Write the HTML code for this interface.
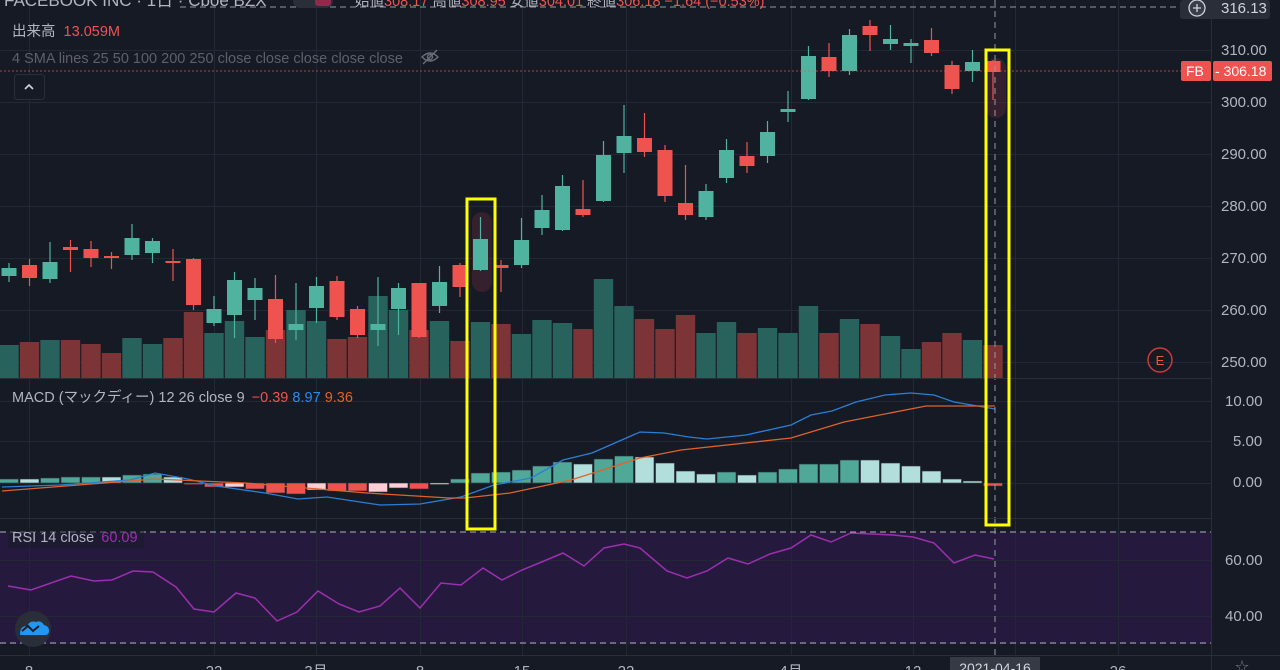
<!DOCTYPE html>
<html><head><meta charset="utf-8"><style>
html,body{margin:0;padding:0;background:#161a25;width:1280px;height:670px;overflow:hidden}
svg{display:block}
text{font-family:"Liberation Sans","Noto Sans CJK JP",sans-serif}
</style></head><body>
<svg id="s" width="1280" height="670" viewBox="0 0 1280 670" xmlns="http://www.w3.org/2000/svg">
<rect width="1280" height="670" fill="#161a25"/>
<rect x="0" y="532" width="1212" height="112" fill="#251a3e"/>
<g id="grid" stroke="#232837" stroke-width="1"></g>
<g id="vol"></g>
<rect x="472" y="212" width="20" height="80" rx="10" fill="#5a2838" opacity="0.45"/>
<rect x="986" y="58" width="20" height="60" rx="10" fill="#5a2838" opacity="0.45"/>
<g id="cdl"></g>
<g id="hist"></g>
<polyline id="macd" fill="none" stroke="#2a7fd4" stroke-width="1.3"/>
<polyline id="sig" fill="none" stroke="#e0622a" stroke-width="1.3"/>
<polyline id="rsi" fill="none" stroke="#9c2fae" stroke-width="1.5"/>
<line x1="0" y1="532" x2="1212" y2="532" stroke="#b0b3bd" stroke-dasharray="6,4"/>
<line x1="0" y1="643" x2="1212" y2="643" stroke="#b0b3bd" stroke-dasharray="6,4"/>
<line x1="0" y1="71" x2="1212" y2="71" stroke="#ef5350" stroke-dasharray="2,2" opacity="0.7"/>
<line x1="180" y1="7" x2="1190" y2="7" stroke="#9598a1" stroke-dasharray="6,4"/>
<line x1="995" y1="0" x2="995" y2="660" stroke="#9598a1" stroke-dasharray="6,5"/>
<line x1="0" y1="378.5" x2="1212" y2="378.5" stroke="#2a2e39"/>
<line x1="0" y1="518.5" x2="1212" y2="518.5" stroke="#2a2e39"/>
<line x1="0" y1="655.5" x2="1280" y2="655.5" stroke="#2a2e39"/>
<line x1="1211.5" y1="0" x2="1211.5" y2="670" stroke="#2a2e39"/>
<rect x="467" y="199" width="28" height="330" fill="none" stroke="#ffff00" stroke-width="3"/>
<rect x="986" y="50" width="23" height="475" fill="none" stroke="#ffff00" stroke-width="3"/>
<text x="4" y="6" font-size="17" fill="#b2b5be">FACEBOOK INC · 1日 · Cboe BZX</text>
<rect x="293" y="-8" width="40" height="16" rx="7" fill="#2a2e39"/>
<rect x="315" y="-6" width="16" height="12" rx="3" fill="#8e2a4a"/>
<text x="355" y="6" font-size="14.5" fill="#b2b5be">始値<tspan fill="#ef5350">308.17</tspan> 高値<tspan fill="#ef5350">308.95</tspan> 安値<tspan fill="#ef5350">304.01</tspan> 終値<tspan fill="#ef5350">306.18 −1.64 (−0.53%)</tspan></text>
<text x="12" y="36" font-size="14.5" fill="#b2b5be">出来高 <tspan fill="#ef5350" dx="4">13.059M</tspan></text>
<text x="12" y="63" font-size="14.5" fill="#5d606b">4 SMA lines 25 50 100 200 250 close close close close close</text>
<g stroke="#6a6d78" stroke-width="1.4" fill="none"><path d="M422 57 q8-8 16 0 q-8 8-16 0z"/><circle cx="430" cy="57" r="2.5"/><line x1="423" y1="64" x2="437" y2="50"/></g>
<rect x="14.5" y="74.5" width="30" height="25" rx="3" fill="#161a25" stroke="#2a2e39"/>
<path d="M25 89 l4-4 4 4" stroke="#d1d4dc" stroke-width="1.6" fill="none"/>
<text x="12" y="402" font-size="14.5" fill="#b2b5be">MACD (マックディー) 12 26 close 9 <tspan fill="#ef5350" dx="3">−0.39</tspan> <tspan fill="#2a8ae8">8.97</tspan> <tspan fill="#e0622a">9.36</tspan></text>
<rect x="8" y="528" width="136" height="20" fill="#161a25" opacity="0.5"/>
<text x="12" y="542" font-size="14.5" fill="#b2b5be">RSI 14 close <tspan fill="#9c2fae" dx="3">60.09</tspan></text>
<circle cx="1160" cy="360" r="12" fill="none" stroke="#c93a3a" stroke-width="1.5"/>
<text x="1160" y="365" font-size="13" fill="#ef5350" text-anchor="middle">E</text>
<circle cx="33" cy="629" r="18" fill="#2a2e39"/>
<path d="M20 634 q0-8 7-8 q3-6 9-4 q5-2 8 3 q5 1 5 6 q0 4-4 4 h-22 q-4 0-3-1z" fill="#2196f3"/>
<path d="M22 631 l6-5 5 5 6-5" stroke="#1a1e2a" stroke-width="2" fill="none"/>
<g font-size="15" fill="#b2b5be">
<text x="1221" y="55">310.00</text><text x="1221" y="107">300.00</text><text x="1221" y="159">290.00</text>
<text x="1221" y="211">280.00</text><text x="1221" y="263">270.00</text><text x="1221" y="315">260.00</text>
<text x="1221" y="367">250.00</text><text x="1225" y="406">10.00</text><text x="1233" y="446">5.00</text>
<text x="1233" y="487">0.00</text><text x="1225" y="565">60.00</text><text x="1225" y="621">40.00</text>
</g>
<rect x="1180" y="0" width="90" height="19" rx="3" fill="#2a2e39"/>
<circle cx="1197" cy="8" r="8" fill="#3a3e49" stroke="#d1d4dc" stroke-width="1.3"/>
<path d="M1197 4v8M1193 8h8" stroke="#d1d4dc" stroke-width="1.3"/>
<text x="1221" y="13" font-size="15" fill="#d1d4dc">316.13</text>
<rect x="1181" y="61" width="30" height="20" rx="2" fill="#ef5350"/>
<rect x="1213" y="61" width="59" height="20" rx="2" fill="#ef5350"/>
<text x="1186" y="76" font-size="14" fill="#fff">FB</text>
<text x="1215" y="76" font-size="14" fill="#fff">- 306.18</text>
<g font-size="15" fill="#b2b5be" text-anchor="middle">
<text x="29" y="676">8</text><text x="214" y="676">22</text><text x="316" y="676">3月</text>
<text x="420" y="676">8</text><text x="522" y="676">15</text><text x="626" y="676">22</text>
<text x="791" y="676">4月</text><text x="913" y="676">12</text><text x="1118" y="676">26</text>
</g>
<rect x="950" y="657" width="90" height="16" fill="#363a45"/>
<text x="995" y="673" font-size="14" fill="#d1d4dc" text-anchor="middle">2021-04-16</text>
<text x="1242" y="672" font-size="14" fill="#787b86" text-anchor="middle">☆</text>
</svg>
<script>
var NS="http://www.w3.org/2000/svg";
function el(p,t,a){var e=document.createElementNS(NS,t);for(var k in a)e.setAttribute(k,a[k]);document.getElementById(p).appendChild(e);return e;}
var G="#4fb3a0",R="#ef5350";
[-2,50,102,154,206,258,310,362,401,441,483,560,616].forEach(function(y){el("grid","line",{x1:0,x2:1212,y1:y+.5,y2:y+.5});});
[29,214,316,420,522,626,791,913,1015,1118].forEach(function(x){el("grid","line",{x1:x+.5,x2:x+.5,y1:0,y2:655});});
var C=[[268,276,263,282,1],[265,278,259,286,0],[262,279,242,283,1],[247,250,240,272,0],[249,258,241,267,0],[256,257,252,269,0],[238,255,224,260,1],[241,253,238,263,1],[261,262,249,281,0],[259,305,258,310,0],
[309,323,296,326,1],[280,315,272,338,1],[288,300,278,320,1],[299,339,275,343,0],[324,330,283,340,1],[286,308,277,323,1],[281,317,276,320,0],[309,335,306,338,0],[324,330,277,346,1],[288,309,283,335,1],
[283,337,283,338,0],[282,306,266,313,1],[265,287,263,297,0],[239,270,217,271,1],[265,268,260,292,0],[240,265,218,268,1],[210,228,195,235,1],[186,230,175,231,1],[209,215,180,217,0],[155,201,141,202,1],
[136,153,105,173,1],[138,152,113,157,0],[150,196,145,202,0],[203,215,165,220,0],[191,217,184,220,1],[150,178,139,183,1],[156,166,142,173,0],[132,156,121,163,1],[109,112,91,122,1],[56,99,46,100,1],
[57,71,43,77,0],[35,71,29,75,1],[26,35,20,51,0],[39,44,25,50,1],[43,46,39,63,1],[40,53,28,56,0],[65,89,61,94,0],[62,71,50,82,1],[61,72,60,100,0]];
var V=[345,342,340,340,344,353,338,344,338,312,333,321,337,330,310,321,339,337,296,310,330,321,341,322,324,334,320,323,329,279,306,319,329,315,333,322,333,328,333,306,333,319,324,336,349,342,333,340,345];
function cx(i){return 9+20.5*i;}
V.forEach(function(v,i){el("vol","rect",{x:cx(i)-9.7,y:v,width:19.4,height:378-v,fill:C[i][4]?"#27625c":"#7d3436"});});
C.forEach(function(c,i){var col=c[4]?G:R,x=cx(i);
el("cdl","line",{x1:x,x2:x,y1:c[2],y2:c[3],stroke:col,"stroke-width":1.2});
el("cdl","rect",{x:x-7.5,y:c[0],width:15,height:Math.max(2,c[1]-c[0]),fill:col});});
var H=[[479,"d"],[479,"l"],[478,"d"],[477,"d"],[477,"d"],[477,"l"],[475,"d"],[474,"d"],[477,"l"],[484,"r"],[487,"r"],[487,"p"],[489,"r"],[493,"r"],[494,"r"],[490,"p"],[491,"r"],[491,"r"],[492,"p"],[488,"p"],[489,"r"],[484,"p"],
[479,"d"],[473,"d"],[472,"d"],[470,"d"],[466,"d"],[462,"d"],[464,"l"],[459,"d"],[456,"d"],[457,"l"],[463,"l"],[471,"l"],[474,"l"],[472,"d"],[475,"l"],[472,"d"],[469,"d"],[464,"d"],[464,"d"],[460,"d"],[460,"l"],[463,"l"],[466,"l"],[471,"l"],[479,"l"],[481,"l"],[486,"r"]];
var HC={d:"#4fa898",l:"#b2dfdb",r:"#ef5350",p:"#ffcdd2"};
H.forEach(function(h,i){var y0=483,t=h[0],y=Math.min(t,y0),hh=Math.max(1.5,Math.abs(t-y0));
el("hist","rect",{x:cx(i)-9.5,y:y,width:19,height:hh,fill:HC[h[1]],stroke:"#2a2e39","stroke-width":0.6});});
document.getElementById("macd").setAttribute("points","2,487 60,485 130,480 155,473 188,479 216,486 265,493 298,499 327,497 380,505 420,504 461,497 494,485 531,478 563,460 592,453 640,432 664,433 689,437 707,439 746,435 791,425 811,415 832,411 856,402 885,395 911,393 934,395 954,402 995,409");
document.getElementById("sig").setAttribute("points","2,491 155,479 245,483 367,493 449,498 465,498 510,493 571,480 640,458 681,450 791,438 844,422 926,406 995,406");
document.getElementById("rsi").setAttribute("points","8,586 31,590 71,576 94,581 112,580 133,571 153,572 176,587 194,609 214,612 236,593 255,598 277,621 297,612 318,591 339,604 359,612 380,606 400,588 420,608 441,583 461,585 483,568 502,580 522,570 544,561 563,553 584,566 604,548 624,544 640,548 667,571 687,578 707,571 728,558 748,564 770,554 791,548 811,535 831,542 851,533 872,534 893,535 913,537 934,543 954,563 975,555 994,559");
</script>
</body></html>
